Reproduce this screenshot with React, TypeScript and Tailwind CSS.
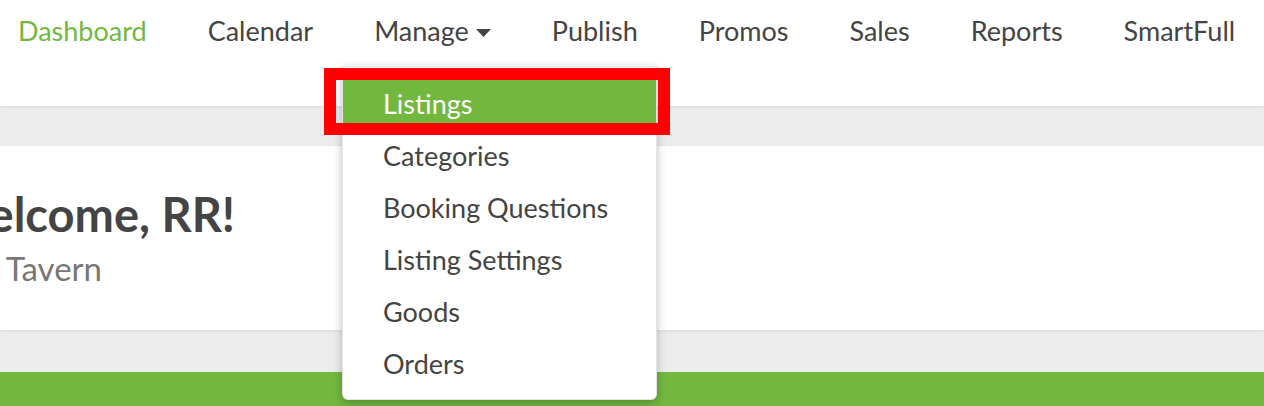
import React from 'react';

const navItems = ['Dashboard', 'Calendar', 'Manage', 'Publish', 'Promos', 'Sales', 'Reports', 'SmartFull'];
const menuItems = ['Listings', 'Categories', 'Booking Questions', 'Listing Settings', 'Goods', 'Orders'];

function Caret() {
  return (
    <svg width="15" height="8" viewBox="0 0 15 8" className="ml-[7px] mt-[4px]">
      <path d="M0 0h15L7.5 8z" fill="#444" />
    </svg>
  );
}

export default function App() {
  return (
    <div className="relative w-[1264px] h-[406px] overflow-hidden bg-[#ececec] font-['Lato',sans-serif]">
      {/* top nav */}
      <header className="h-[106px] bg-white shadow-[0_1px_3px_rgba(0,0,0,0.08)] relative z-10">
        <nav className="flex items-center h-[62px] pl-[18px] gap-[61px] text-[27px] text-[#444]">
          {navItems.map((item, i) => (
            <a key={item} className={`flex items-center ${i === 0 ? 'text-[#72b83f]' : ''}`}>
              {item}
              {item === 'Manage' && <Caret />}
            </a>
          ))}
        </nav>
      </header>

      <div className="h-[40px]" />

      {/* welcome card, scrolled so its left edge is cut */}
      <section className="h-[184px] bg-white shadow-[0_1px_3px_rgba(0,0,0,0.08)] overflow-hidden pt-[40px]">
        <h1 className="ml-[-58px] text-[47px] leading-[56px] font-bold text-[#444] whitespace-nowrap">Welcome, RR!</h1>
        <p className="ml-[-43px] text-[33px] leading-[40px] mt-[6px] text-[#777] whitespace-nowrap">RR Tavern</p>
      </section>

      <div className="h-[42px]" />
      <div className="h-[34px] bg-[#72b83f]" />

      {/* Manage dropdown */}
      <div className="absolute left-[342px] top-[66px] w-[315px] bg-white rounded-b-[6px] border border-black/10 shadow-[0_3px_10px_rgba(0,0,0,0.25)] pt-[11px] pb-[9px] z-20">
        {menuItems.map((item, i) => (
          <div
            key={item}
            className={`h-[52px] flex items-center pl-[40px] text-[27px] ${
              i === 0 ? 'bg-[#72b83f] text-white' : 'text-[#444]'
            }`}
          >
            {item}
          </div>
        ))}
      </div>

      {/* highlight box */}
      <div className="absolute left-[324px] top-[68px] w-[346px] h-[67px] border-[12px] border-[#ff0000] z-30" />
    </div>
  );
}
